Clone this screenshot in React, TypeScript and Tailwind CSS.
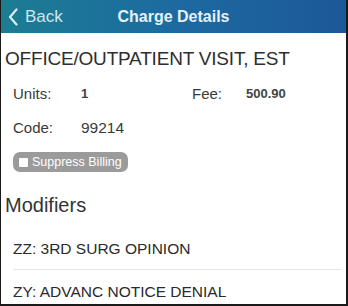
import React from "react";

export default function App() {
  return (
    <div className="w-[348px] h-[306px] overflow-hidden bg-white border-l border-r-2 border-b-2 border-[#1a1a1a]" style={{ fontFamily: '"Liberation Sans", Arial, sans-serif' }}>
      <div className="h-[33px] flex items-center relative bg-gradient-to-r from-[#1c7d92] via-[#1d6aa0] to-[#1c5898] text-white">
        <div className="flex items-center pl-[7px] gap-[7px] text-[#cfe6f0]">
          <svg width="10" height="18" viewBox="0 0 10 18" fill="none">
            <path d="M8.5 1.5 L2 9 L8.5 16.5" stroke="#d8ecf4" strokeWidth="2.2" strokeLinecap="round" strokeLinejoin="round" />
          </svg>
          <span className="text-[17px] leading-none">Back</span>
        </div>
        <div className="absolute left-0 right-0 text-center text-[16px] font-bold leading-none text-[#e4f1f7] pointer-events-none">Charge Details</div>
      </div>
      <div className="pl-[4px] pt-[14px] text-[19px] leading-[24px] text-[#2e2e2e] tracking-[-0.2px]">OFFICE/OUTPATIENT VISIT, EST</div>
      <div className="pl-[12px] pt-[14px] flex items-center text-[15px] leading-[18px] text-[#3a3a3a]">
        <span className="w-[68px]">Units:</span>
        <span className="w-[111px] text-[13px] font-bold text-[#444]">1</span>
        <span className="w-[54px]">Fee:</span>
        <span className="text-[13px] font-bold text-[#444]">500.90</span>
      </div>
      <div className="pl-[12px] pt-[16px] flex items-center text-[15px] leading-[18px] text-[#3a3a3a]">
        <span className="w-[68px]">Code:</span>
        <span className="text-[15.5px]">99214</span>
      </div>
      <div className="pl-[12px] pt-[15px] flex">
        <div className="flex items-center gap-[4px] h-[20px] px-[6px] rounded-[7px] bg-[#9b9b9b] text-white text-[12.5px] leading-none">
          <span className="w-[9px] h-[9px] bg-white rounded-[1px]" />
          <span>Suppress Billing</span>
        </div>
      </div>
      <div className="pl-[4px] pt-[21px] text-[20px] leading-[24px] text-[#333]">Modifiers</div>
      <div className="ml-[12px] mr-[5px] pt-[23px] pb-[11px] text-[15.5px] leading-[18px] text-[#2a2a2a] border-b border-[#e6e6e6]">
        ZZ: 3RD SURG OPINION
      </div>
      <div className="pl-[12px] pt-[13px] text-[15.5px] leading-[18px] text-[#2a2a2a]">ZY: ADVANC NOTICE DENIAL</div>
    </div>
  );
}
